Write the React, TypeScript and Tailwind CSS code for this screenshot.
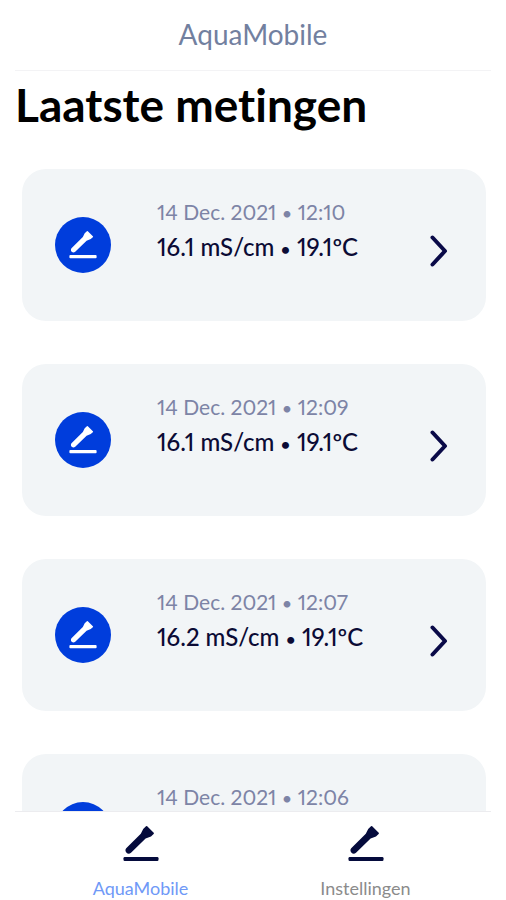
import React, { useState } from "react";

type Measurement = { date: string; time: string; conductivity: string; temperature: string };

const measurements: Measurement[] = [
  { date: "14 Dec. 2021", time: "12:10", conductivity: "16.1 mS/cm", temperature: "19.1ºC" },
  { date: "14 Dec. 2021", time: "12:09", conductivity: "16.1 mS/cm", temperature: "19.1ºC" },
  { date: "14 Dec. 2021", time: "12:07", conductivity: "16.2 mS/cm", temperature: "19.1ºC" },
  { date: "14 Dec. 2021", time: "12:06", conductivity: "16.1 mS/cm", temperature: "19.1ºC" },
];

function ProbeIcon({ className }: { className: string }) {
  return (
    <svg viewBox="0 0 36 36" className={className} fill="currentColor" aria-hidden="true">
      <path d="M23 0.3 Q23.6 -0.2 24.2 0.3 L30.7 6.7 Q31.3 7.4 30.6 8 L28 10.4 L22.6 12.4 L8 26.8 Q5.6 28.6 3.5 26.8 Q1.5 24.6 3.2 22.2 L17.8 7.7 L20.2 3 Z" />
      <rect x="0.5" y="31" width="35" height="4" rx="1.2" />
    </svg>
  );
}

function MeasurementCard({ item }: { item: Measurement }) {
  return (
    <li>
      <button
        type="button"
        className="flex h-[152px] w-full items-center rounded-3xl bg-[#f2f5f7] pl-[33px] pr-[38px] text-left"
      >
        <span className="flex size-14 shrink-0 items-center justify-center rounded-full bg-[#003ddc] text-white">
          <ProbeIcon className="size-7" />
        </span>
        <span className="ml-[46px] flex flex-1 flex-col self-start pt-[25px] whitespace-nowrap proportional-nums">
          <span className="text-[21px] leading-[35px] text-[#7d84a6]">
            {item.date} <span className="text-lg leading-none">•</span> {item.time}
          </span>
          <span className="text-2xl leading-[35px] font-medium text-[#0b0b35]">
            {item.conductivity} <span className="text-lg leading-none">•</span> {item.temperature}
          </span>
        </span>
        <svg
          viewBox="0 0 18 32"
          className="mt-3 h-8 w-[18px] shrink-0"
          fill="none"
          stroke="#0a0a48"
          strokeWidth="4"
          strokeLinecap="round"
          strokeLinejoin="round"
          aria-hidden="true"
        >
          <path d="M2.5 2.5 L15 16 L2.5 29.5" />
        </svg>
      </button>
    </li>
  );
}

export default function App() {
  const [tab, setTab] = useState("AquaMobile");
  return (
    <div className="flex h-screen flex-col bg-white font-['Lato','Open_Sans',sans-serif] [font-variant-ligatures:none]">
      <header className="mx-[15px] flex justify-center border-b border-[#f3f3f5] pt-4 pb-[18px]">
        <span className="text-[28px] leading-9 text-[#72809f]">AquaMobile</span>
      </header>
      <main className="min-h-0 flex-1 overflow-y-auto [scrollbar-width:none]">
        <h1 className="px-[15px] pt-[7px] text-[46px] leading-[54px] font-bold text-black">
          Laatste metingen
        </h1>
        <ul className="flex flex-col gap-[43px] pt-[37px] pr-5 pb-10 pl-[22px]">
          {measurements.map((m) => (
            <MeasurementCard key={m.time} item={m} />
          ))}
        </ul>
      </main>
      <nav className="mx-[15px] grid grid-cols-2 border-t border-[#ececef] px-[13px] pt-[14px]">
        {["AquaMobile", "Instellingen"].map((name) => (
          <button
            key={name}
            type="button"
            onClick={() => setTab(name)}
            className="flex flex-col items-center gap-[14px] text-[#050b3c]"
          >
            <ProbeIcon className="size-9" />
            <span
              className={
                tab === name
                  ? "text-lg leading-6 text-[#6f99f7]"
                  : "text-lg leading-6 text-[#8b8b8b]"
              }
            >
              {name}
            </span>
          </button>
        ))}
      </nav>
    </div>
  );
}
